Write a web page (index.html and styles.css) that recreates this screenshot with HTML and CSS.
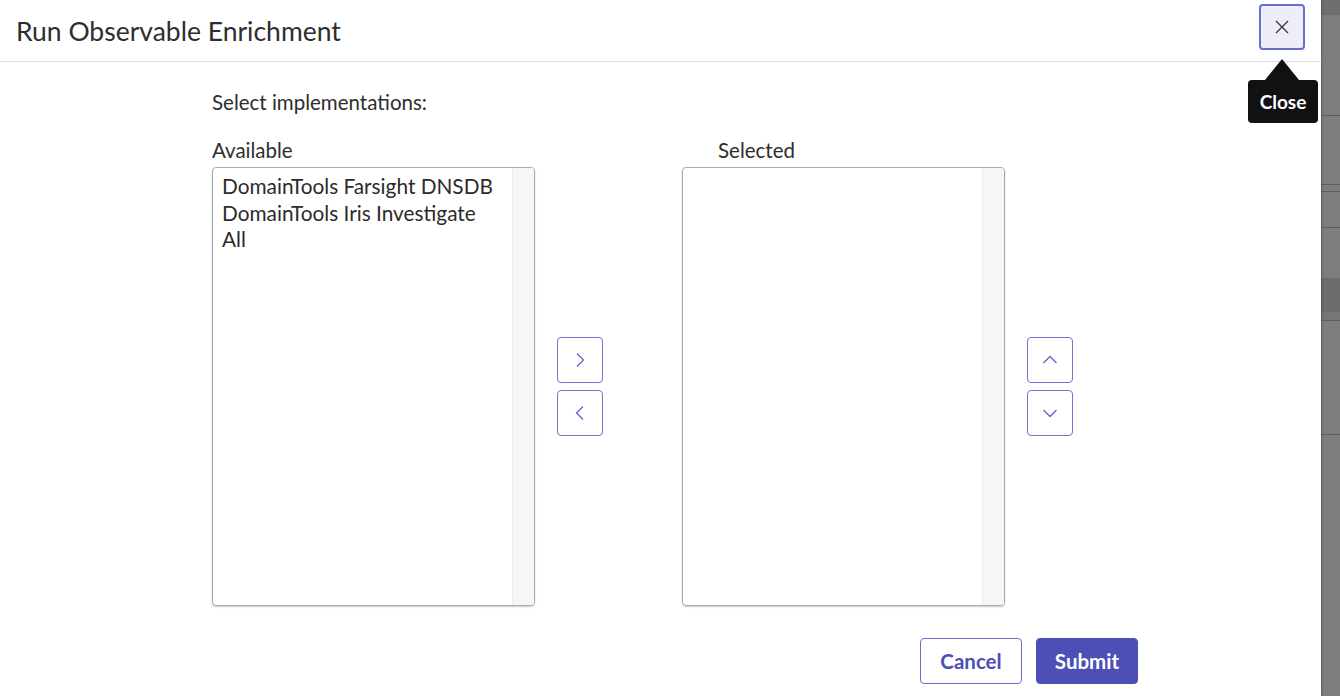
FILE: index.html
```html
<html>
<head>
    <link rel="stylesheet" href="styles.css">
</head>
<body>
    <div class="modal">
        <div class="modal-header">
            <h1 class="modal-title">Run Observable Enrichment</h1>
            <button class="close-btn" aria-label="Close">
                <svg width="16" height="16" viewBox="0 0 16 16"><path d="M2 2 L14 14 M14 2 L2 14" stroke="#3a3a3a" stroke-width="1.4" fill="none"/></svg>
            </button>
            <div class="tooltip">Close</div>
        </div>

        <div class="modal-body">
            <div class="intro">Select implementations:</div>

            <div class="slushbucket">
                <div class="bucket">
                    <div class="bucket-label">Available</div>
                    <div class="listbox">
                        <div class="options">
                            <div class="option">DomainTools Farsight DNSDB</div>
                            <div class="option">DomainTools Iris Investigate</div>
                            <div class="option">All</div>
                        </div>
                        <div class="track"></div>
                    </div>
                </div>

                <div class="move-btns">
                    <button class="icon-btn" aria-label="Add">
                        <svg width="18" height="18" viewBox="0 0 18 18"><path d="M6 2.5 L12.5 9 L6 15.5" stroke="#6265cb" stroke-width="1.3" fill="none"/></svg>
                    </button>
                    <button class="icon-btn" aria-label="Remove">
                        <svg width="18" height="18" viewBox="0 0 18 18"><path d="M12 2.5 L5.5 9 L12 15.5" stroke="#6265cb" stroke-width="1.3" fill="none"/></svg>
                    </button>
                </div>

                <div class="bucket bucket-right">
                    <div class="bucket-label">Selected</div>
                    <div class="listbox">
                        <div class="options"></div>
                        <div class="track"></div>
                    </div>
                </div>

                <div class="move-btns">
                    <button class="icon-btn" aria-label="Move up">
                        <svg width="18" height="18" viewBox="0 0 18 18"><path d="M2.5 12 L9 5.5 L15.5 12" stroke="#6265cb" stroke-width="1.3" fill="none"/></svg>
                    </button>
                    <button class="icon-btn" aria-label="Move down">
                        <svg width="18" height="18" viewBox="0 0 18 18"><path d="M2.5 6 L9 12.5 L15.5 6" stroke="#6265cb" stroke-width="1.3" fill="none"/></svg>
                    </button>
                </div>
            </div>

            <div class="modal-footer">
                <button class="btn btn-default">Cancel</button>
                <button class="btn btn-primary">Submit</button>
            </div>
        </div>
    </div>
    <div class="backdrop"></div>
</body>
</html>
```

FILE: styles.css
```css
body {
    margin: 0;
    display: flex;
    height: 696px;
    overflow: hidden;
    font-family: Lato, 'Noto Sans', sans-serif;
    color: #2e2e2e;
    background: #808080;
}

.modal {
    width: 1321px;
    height: 100%;
    background: #fff;
    box-shadow: 1px 0 2px rgba(0,0,0,0.25);
    position: relative;
    z-index: 1;
}

.backdrop {
    flex: 1;
    background:
        linear-gradient(to bottom,
            #6f6f6f 0, #6f6f6f 15px,
            #7d7d7d 15px, #7d7d7d 115px,
            #5e5e5e 115px, #5e5e5e 116px,
            #7d7d7d 116px, #7d7d7d 184px,
            #5e5e5e 184px, #5e5e5e 185px,
            #7d7d7d 185px, #7d7d7d 191px,
            #5e5e5e 191px, #5e5e5e 192px,
            #7d7d7d 192px, #7d7d7d 227px,
            #5e5e5e 227px, #5e5e5e 228px,
            #7d7d7d 228px, #7d7d7d 278px,
            #6c6c6c 278px, #6c6c6c 312px,
            #767676 312px, #767676 320px,
            #5e5e5e 320px, #5e5e5e 321px,
            #7d7d7d 321px, #7d7d7d 434px,
            #5e5e5e 434px, #5e5e5e 435px,
            #7d7d7d 435px);
}

.modal-header {
    height: 61px;
    border-bottom: 1px solid #dedede;
    display: flex;
    align-items: center;
    justify-content: space-between;
    padding: 0 16px;
    position: relative;
}

.modal-title {
    margin: 0;
    font-size: 26.5px;
    font-weight: 400;
    color: #2e2e2e;
}

.close-btn {
    width: 46px;
    height: 46px;
    margin-top: -8px;
    border: 2px solid #6a6dd0;
    border-radius: 4px;
    background: #eeeef9;
    display: flex;
    align-items: center;
    justify-content: center;
    padding: 0;
}

.tooltip {
    position: absolute;
    top: 80px;
    right: 3px;
    width: 70px;
    height: 43px;
    background: #111114;
    color: #fff;
    border-radius: 4px;
    font-size: 19px;
    font-weight: 700;
    display: flex;
    align-items: center;
    justify-content: center;
}

.tooltip::before {
    content: '';
    position: absolute;
    top: -21px;
    left: 17px;
    border: 17px solid transparent;
    border-top: 0;
    border-bottom: 21px solid #111114;
}

.modal-body {
    padding: 28px 0 0 212px;
}

.intro {
    font-size: 20.5px;
    line-height: 24px;
}

.slushbucket {
    display: flex;
    align-items: flex-end;
    margin-top: 24px;
}

.bucket-label {
    font-size: 20.5px;
    line-height: 24px;
    margin-bottom: 5px;
}

.bucket-right .bucket-label {
    padding-left: 36px;
}

.listbox {
    width: 321px;
    height: 437px;
    border: 1px solid #a8a8ae;
    border-radius: 4px;
    box-shadow: 0 1px 2px rgba(0,0,0,0.2);
    display: flex;
    overflow: hidden;
}

.options {
    flex: 1;
    padding: 5px 0 0 9px;
}

.option {
    font-size: 20.8px;
    line-height: 26.5px;
    color: #2b2b2b;
}

.track {
    width: 21px;
    background: #f6f6f8;
    border-left: 1px solid #ececef;
}

.move-btns {
    display: flex;
    flex-direction: column;
    gap: 7px;
    height: 439px;
    justify-content: center;
    margin: 0 79px 0 22px;
}

.icon-btn {
    width: 46px;
    height: 46px;
    border: 1.6px solid #7275d2;
    border-radius: 4px;
    background: #fff;
    display: flex;
    align-items: center;
    justify-content: center;
    padding: 0;
}

.modal-footer {
    display: flex;
    justify-content: flex-end;
    gap: 14px;
    width: 926px;
    margin-top: 32px;
}

.btn {
    width: 102px;
    height: 46px;
    border-radius: 4px;
    font-family: Lato, 'Noto Sans', sans-serif;
    font-size: 20.5px;
    font-weight: 700;
}

.btn-default {
    background: #fff;
    border: 1.6px solid #6a6dd0;
    color: #4d50b3;
}

.btn-primary {
    background: #4c4fb6;
    border: 1px solid #4c4fb6;
    color: #fff;
}
```
